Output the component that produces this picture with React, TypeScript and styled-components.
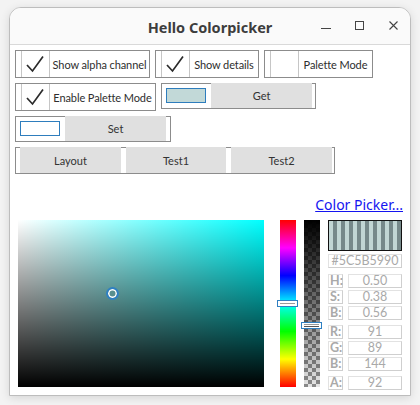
import React from "react";
import styled, { createGlobalStyle } from "styled-components";

const GlobalStyle = createGlobalStyle`
  html, body {
    margin: 0;
    padding: 0;
    background: #f3f3f3;
  }
  body {
    width: 420px;
    height: 405px;
    overflow: hidden;
    font-family: "Lato", "Noto Sans", sans-serif;
    font-size: 11px;
    color: #333;
  }
`;

const Desktop = styled.div`
  box-sizing: border-box;
  width: 420px;
  height: 405px;
  padding: 7px 0 0 9px;
`;

const Window = styled.div`
  box-sizing: border-box;
  width: 402px;
  height: 389px;
  border: 1px solid #bdbdbd;
  border-radius: 12px 12px 0 0;
  background: #fff;
  box-shadow: 0 2px 10px rgba(0, 0, 0, 0.12);
  display: flex;
  flex-direction: column;
  overflow: hidden;
`;

const TitleBar = styled.div`
  box-sizing: border-box;
  height: 37px;
  flex: none;
  background: #fafafa;
  border-bottom: 1px solid #d9d9d9;
  display: grid;
  grid-template-columns: 1fr auto 1fr;
  align-items: center;
`;

const Title = styled.div`
  grid-column: 2;
  font-family: "Noto Sans", sans-serif;
  font-weight: bold;
  font-size: 14.5px;
  color: #3d3d3d;
  padding-top: 1px;
`;

const Controls = styled.div`
  grid-column: 3;
  justify-self: end;
  display: flex;
  align-items: center;
  gap: 18px;
  padding-right: 8px;
`;

const CtrlIcon = styled.svg`
  width: 16px;
  height: 16px;
  display: block;
`;

const Content = styled.div`
  flex: 1;
  display: flex;
  flex-direction: column;
  padding: 5px 7px 7px 5px;
`;

const Rows = styled.div`
  display: flex;
  flex-direction: column;
  gap: 5px;
`;

const Row = styled.div`
  display: flex;
  align-items: flex-start;
  gap: 5px;
`;

const CheckBox = styled.div<{ $w: number }>`
  box-sizing: border-box;
  width: ${(p) => p.$w}px;
  height: 28px;
  border: 1px solid #8c8c8c;
  display: flex;
  padding-left: 5px;
`;

const CheckCell = styled.div`
  box-sizing: border-box;
  width: 29px;
  border-left: 1px solid #c6c6c6;
  border-right: 1px solid #c6c6c6;
  display: flex;
  align-items: center;
  justify-content: center;
`;

const CheckLabel = styled.div`
  flex: 1;
  display: flex;
  align-items: center;
  justify-content: center;
  white-space: nowrap;
  color: #2e2e2e;
  letter-spacing: -0.1px;
`;

const Group = styled.div<{ $w: number; $h: number; $pr: number }>`
  box-sizing: border-box;
  width: ${(p) => p.$w}px;
  height: ${(p) => p.$h}px;
  border: 1px solid #8c8c8c;
  display: flex;
  align-items: flex-start;
  padding: 0 ${(p) => p.$pr}px 0 4px;
  gap: 5px;
`;

const Swatch = styled.div<{ $fill: string }>`
  box-sizing: border-box;
  width: 40px;
  height: 15px;
  margin-top: 4px;
  border: 1px solid #2e7dbd;
  background: ${(p) => p.$fill};
  flex: none;
`;

const Button = styled.div<{ $w: number; $h: number }>`
  box-sizing: border-box;
  width: ${(p) => p.$w}px;
  height: ${(p) => p.$h}px;
  margin-top: -1px;
  background: #e0e0e0;
  display: flex;
  align-items: center;
  justify-content: center;
  color: #333;
  flex: none;
`;

const ButtonBar = styled.div`
  box-sizing: border-box;
  width: 320px;
  height: 27px;
  border: 1px solid #8c8c8c;
  display: flex;
  align-items: flex-start;
  gap: 5px;
  padding-left: 4px;
`;

const LinkRow = styled.div`
  margin-top: 22px;
  height: 18px;
  display: flex;
  justify-content: flex-end;
  align-items: center;
`;

const Link = styled.a`
  font-family: "Noto Sans", sans-serif;
  font-size: 14px;
  line-height: 18px;
  color: #1414f0;
  text-decoration: underline;
  cursor: pointer;
`;

const Picker = styled.div`
  margin-top: 6px;
  margin-left: 3px;
  display: flex;
  align-items: flex-start;
`;

const SVArea = styled.div`
  position: relative;
  width: 246px;
  height: 167px;
  background: linear-gradient(to bottom, rgba(0, 0, 0, 0), #000),
    linear-gradient(to right, #fff, rgba(255, 255, 255, 0)), #00ffff;
  flex: none;
`;

const SVDot = styled.div`
  position: absolute;
  left: 88px;
  top: 67px;
  box-sizing: border-box;
  width: 13px;
  height: 13px;
  border-radius: 50%;
  border: 2px solid #2f80c2;
  box-shadow: inset 0 0 0 1.5px #fff;
  background: rgb(89, 143, 143);
`;

const Bar = styled.div`
  position: relative;
  width: 16px;
  height: 167px;
  flex: none;
`;

const HueBar = styled(Bar)`
  margin-left: 16px;
  background: linear-gradient(
    to bottom,
    #ff0000,
    #ff00ff 16.7%,
    #0000ff 33.3%,
    #00ffff 50%,
    #00ff00 66.7%,
    #ffff00 83.3%,
    #ff0000
  );
`;

const AlphaBar = styled(Bar)`
  margin-left: 8px;
  background: linear-gradient(to bottom, #000, rgba(0, 0, 0, 0)),
    conic-gradient(#8a8a8a 25%, #e6e6e6 0 50%, #8a8a8a 0 75%, #e6e6e6 0) 0 0 / 8px 8px;
`;

const Handle = styled.div<{ $top: number; $double?: boolean }>`
  position: absolute;
  left: -3px;
  top: ${(p) => p.$top}px;
  box-sizing: border-box;
  width: 21px;
  height: 7px;
  border: 1px solid #2f80c2;
  background: #fff;
  &::after {
    content: "";
    position: absolute;
    left: 2px;
    right: 2px;
    top: ${(p) => (p.$double ? 1 : 2)}px;
    height: 1px;
    background: #9a9a9a;
    box-shadow: ${(p) => (p.$double ? "0 2px 0 #555" : "none")};
  }
`;

const Panel = styled.div`
  margin-left: 8px;
  width: 74px;
  display: flex;
  flex-direction: column;
  flex: none;
`;

const Preview = styled.div`
  box-sizing: border-box;
  height: 31px;
  border: 1px solid #111;
  background: repeating-linear-gradient(
    to right,
    #c1d6d4 0 4px,
    #76898a 4px 8px
  );
`;

const Field = styled.div<{ $mt?: number }>`
  box-sizing: border-box;
  height: 14px;
  margin-top: ${(p) => p.$mt ?? 3}px;
  border: 1px solid #e2e2e2;
  border-right-color: #cfcfcf;
  border-bottom-color: #cfcfcf;
  color: #a9a9a9;
  font-size: 12.5px;
  line-height: 12px;
  text-align: center;
  background: #fff;
`;

const ValueRow = styled.div<{ $mt: number }>`
  display: flex;
  gap: 5px;
  margin-top: ${(p) => p.$mt}px;
`;

const ValueLabel = styled(Field)`
  margin-top: 0;
  width: 15px;
  flex: none;
  text-align: left;
  padding-left: 1px;
  font-weight: bold;
`;

const ValueField = styled(Field)`
  margin-top: 0;
  flex: 1;
`;

type CB = { label: string; w: number; checked: boolean };

const CheckMark = () => (
  <svg width="27" height="26" viewBox="0 0 27 26">
    <path d="M5 14 L10.5 20 L21 5.5" fill="none" stroke="#2b2b2b" strokeWidth="1.7" strokeLinejoin="miter" />
  </svg>
);

const Check = ({ label, w, checked }: CB) => (
  <CheckBox $w={w}>
    <CheckCell>{checked && <CheckMark />}</CheckCell>
    <CheckLabel>{label}</CheckLabel>
  </CheckBox>
);

const values: { l: string; v: string; mt: number }[] = [
  { l: "H:", v: "0.50", mt: 6 },
  { l: "S:", v: "0.38", mt: 2 },
  { l: "B:", v: "0.56", mt: 2 },
  { l: "R:", v: "91", mt: 5 },
  { l: "G:", v: "89", mt: 2 },
  { l: "B:", v: "144", mt: 2 },
  { l: "A:", v: "92", mt: 5 },
];

export default function App() {
  return (
    <>
      <GlobalStyle />
      <Desktop>
        <Window>
          <TitleBar>
            <Title>Hello Colorpicker</Title>
            <Controls>
              <CtrlIcon viewBox="0 0 16 16">
                <path d="M3 10.5 H13" stroke="#444" strokeWidth="1" />
              </CtrlIcon>
              <CtrlIcon viewBox="0 0 16 16">
                <rect x="3.5" y="3.5" width="8" height="8" fill="none" stroke="#444" strokeWidth="1" />
              </CtrlIcon>
              <CtrlIcon viewBox="0 0 16 16">
                <path d="M3.5 3.5 L11.5 11.5 M11.5 3.5 L3.5 11.5" stroke="#444" strokeWidth="1.1" />
              </CtrlIcon>
            </Controls>
          </TitleBar>
          <Content>
            <Rows>
              <Row>
                <Check label="Show alpha channel" w={135} checked />
                <Check label="Show details" w={104} checked />
                <Check label="Palette Mode" w={109} checked={false} />
              </Row>
              <Row>
                <Check label="Enable Palette Mode" w={141} checked />
                <Group $w={155} $h={26} $pr={2}>
                  <Swatch $fill="#c2d9d8" />
                  <Button $w={101} $h={25}>Get</Button>
                </Group>
              </Row>
              <Row>
                <Group $w={156} $h={26} $pr={4}>
                  <Swatch $fill="#ffffff" />
                  <Button $w={101} $h={25}>Set</Button>
                </Group>
              </Row>
              <Row>
                <ButtonBar>
                  <Button $w={101} $h={26}>Layout</Button>
                  <Button $w={100} $h={26}>Test1</Button>
                  <Button $w={101} $h={26}>Test2</Button>
                </ButtonBar>
              </Row>
            </Rows>
            <LinkRow>
              <Link>Color Picker...</Link>
            </LinkRow>
            <Picker>
              <SVArea>
                <SVDot />
              </SVArea>
              <HueBar>
                <Handle $top={80} />
              </HueBar>
              <AlphaBar>
                <Handle $top={102} $double />
              </AlphaBar>
              <Panel>
                <Preview />
                <Field $mt={3}>#5C5B5990</Field>
                {values.map((r, i) => (
                  <ValueRow key={i} $mt={r.mt}>
                    <ValueLabel>{r.l}</ValueLabel>
                    <ValueField>{r.v}</ValueField>
                  </ValueRow>
                ))}
              </Panel>
            </Picker>
          </Content>
        </Window>
      </Desktop>
    </>
  );
}
